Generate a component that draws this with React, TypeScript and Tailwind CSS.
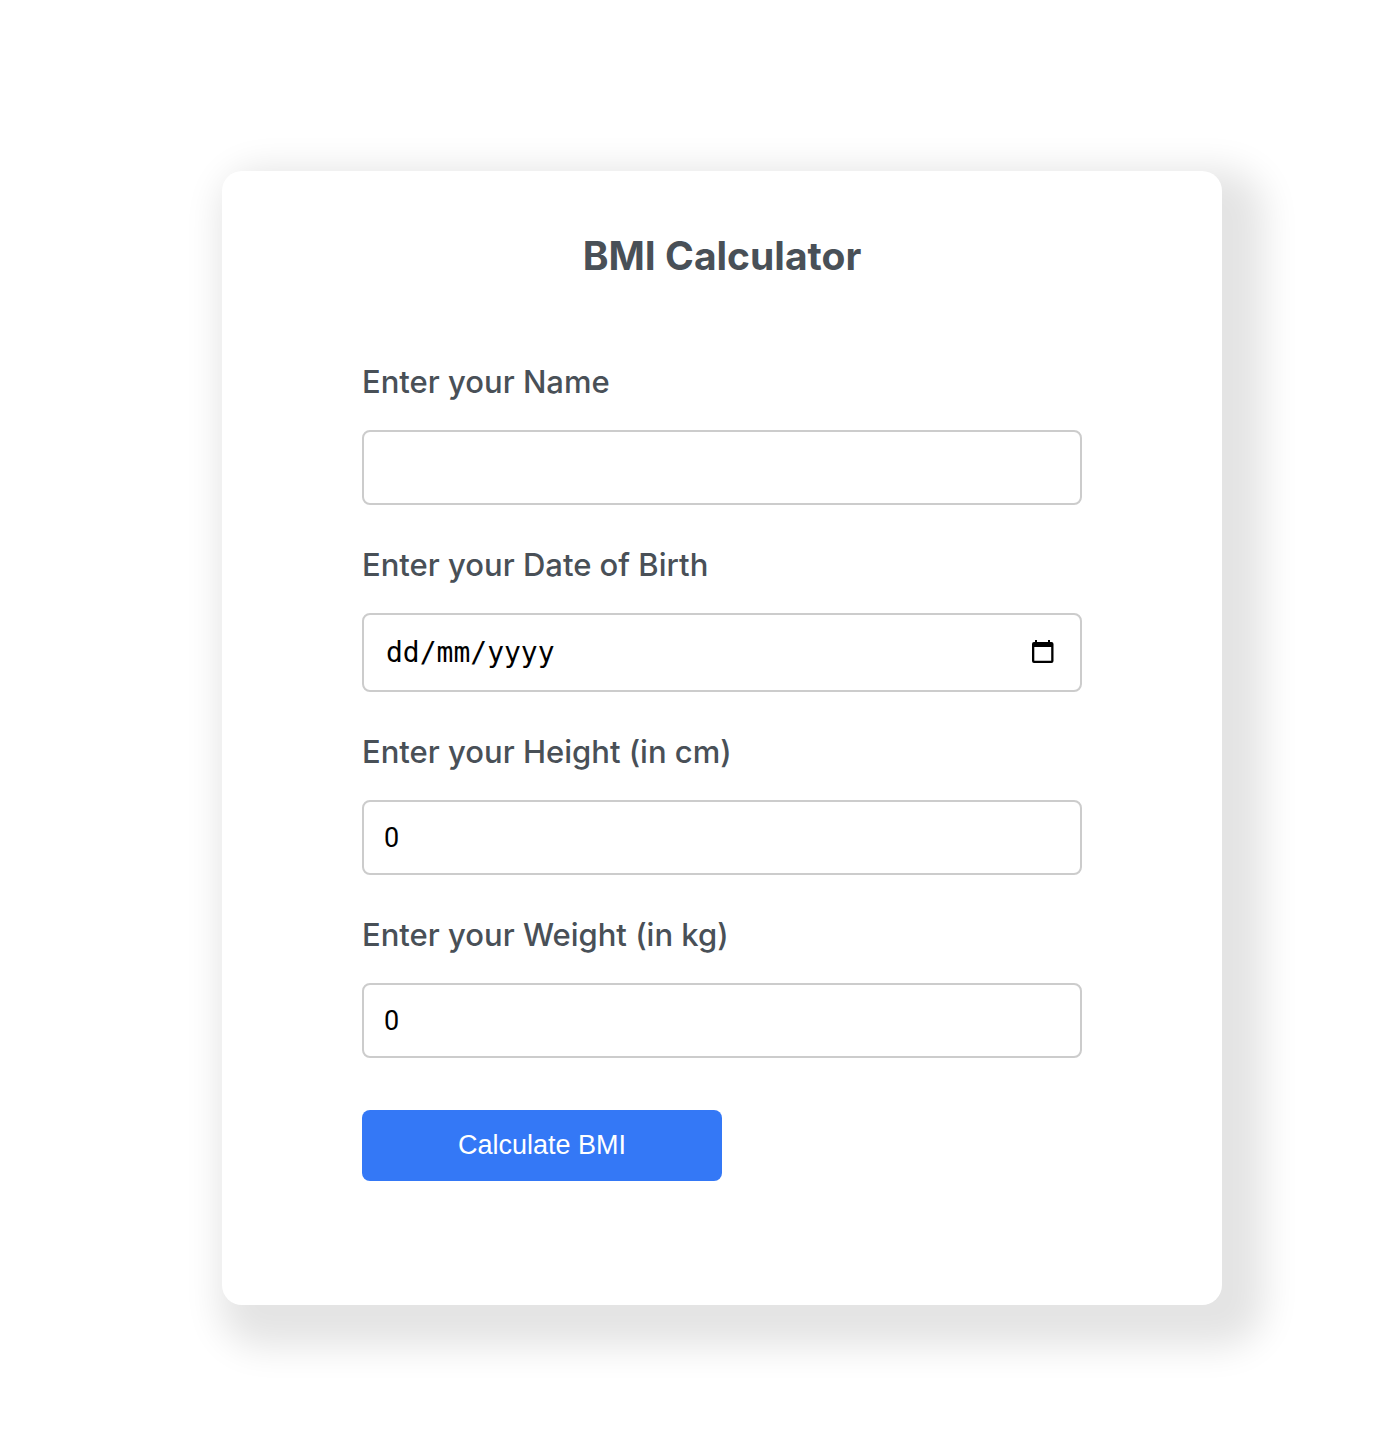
import { useState } from "react";

const labelClass = "text-[31px] leading-[40px] font-medium text-[#495057]";
const inputClass =
  "w-full rounded-[8px] border-2 border-[#cccccc] bg-white px-5 font-['Roboto',sans-serif] text-[27px] text-black outline-none focus:border-[#3478f6]";

function Field({ id, label, value, onChange }: { id: string; label: string; value: string; onChange: (v: string) => void }) {
  return (
    <div className="flex flex-col gap-7">
      <label htmlFor={id} className={labelClass}>{label}</label>
      <input id={id} type="text" value={value} onChange={(e) => onChange(e.target.value)} className={`${inputClass} h-[75px]`} />
    </div>
  );
}

export default function App() {
  const [name, setName] = useState("");
  const [birth, setBirth] = useState("");
  const [height, setHeight] = useState("0");
  const [weight, setWeight] = useState("0");

  return (
    <main className="flex min-h-screen justify-center bg-white pt-[171px] pb-[141px] pl-[70px] font-['Inter',sans-serif]">
      <section className="w-full max-w-[1000px] rounded-[20px] bg-white px-[140px] pt-[60px] pb-[124px] shadow-[20px_20px_36px_22px_rgba(0,0,0,0.11)]">
        <h1 className="text-center text-[39px] leading-[50px] font-bold text-[#495057]">BMI Calculator</h1>
        <form className="mt-[81px] flex flex-col gap-10" onSubmit={(e) => e.preventDefault()}>
          <Field id="name" label="Enter your Name" value={name} onChange={setName} />
          <div className="flex flex-col gap-7">
            <label htmlFor="birth" className={labelClass}>Enter your Date of Birth</label>
            <div className="relative">
              <input
                id="birth"
                type="text"
                placeholder="dd/mm/yyyy"
                value={birth}
                onChange={(e) => setBirth(e.target.value)}
                className="h-[79px] w-full rounded-[8px] border-2 border-[#cccccc] bg-white px-[22px] font-['DejaVu_Sans_Mono',monospace] text-[28px] text-black outline-none placeholder:text-black focus:border-[#3478f6]"
              />
              <button type="button" aria-label="Open calendar" className="absolute top-0 right-7 bottom-1 flex items-center">
                <svg width="22" height="24" viewBox="0 0 22 24" fill="none">
                  <path d="M3 1h2v2h11V1h2v2h1.5a2 2 0 0 1 2 2v17a2 2 0 0 1-2 2H2a2 2 0 0 1-2-2V5a2 2 0 0 1 2-2h1zM2.3 8v13.8h16.9V8z" fill="#000" fillRule="evenodd" />
                </svg>
              </button>
            </div>
          </div>
          <Field id="height" label="Enter your Height (in cm)" value={height} onChange={setHeight} />
          <Field id="weight" label="Enter your Weight (in kg)" value={weight} onChange={setWeight} />
          <button type="submit" className="mt-3 h-[71px] w-1/2 rounded-[8px] bg-[#3478f6] font-['Liberation_Sans',sans-serif] text-[27px] text-white">
            Calculate BMI
          </button>
        </form>
      </section>
    </main>
  );
}
